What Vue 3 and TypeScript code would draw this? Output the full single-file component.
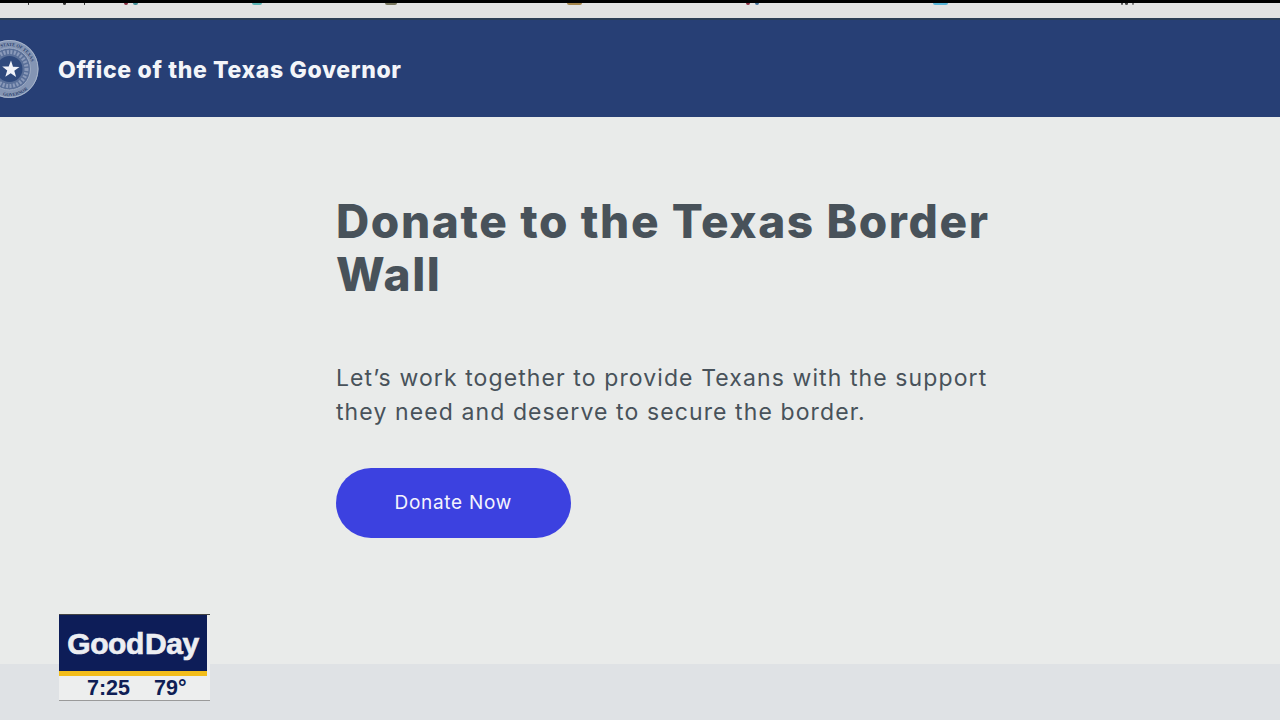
<script setup lang="ts">
// Bits of browser bookmark icons cut off by the top of the frame
const stubs = [
  { x: 28, w: 1, color: '#333333' },
  { x: 63, w: 3, color: '#333333' },
  { x: 84, w: 1, color: '#333333' },
  { x: 124, w: 4, color: '#8a2a3c' },
  { x: 133, w: 5, color: '#3f8f98' },
  { x: 252, w: 10, color: '#5cb5b5' },
  { x: 385, w: 12, color: '#77755c' },
  { x: 567, w: 15, color: '#a5854a' },
  { x: 746, w: 4, color: '#8a2a3c' },
  { x: 755, w: 4, color: '#3f6f98' },
  { x: 933, w: 15, color: '#58b5d8' },
  { x: 1121, w: 2, color: '#555555' },
  { x: 1125, w: 3, color: '#444444' },
  { x: 1132, w: 2, color: '#777777' },
]
</script>

<template>
  <div class="page">
    <!-- browser chrome sliver -->
    <div class="chrome">
      <div class="chrome-black">
        <span
          v-for="s in stubs"
          :key="s.x"
          class="stub"
          :style="{ left: s.x + 'px', width: s.w + 'px', background: s.color }"
        />
      </div>
    </div>

    <!-- site header -->
    <header class="site-head">
      <svg class="seal" width="44" height="60" viewBox="0 0 44 60" aria-hidden="true">
        <circle cx="9.500" cy="30" r="29" fill="#8495b4" />
        <circle cx="9.500" cy="30" r="28.500" fill="none" stroke="#a9b6cc" stroke-width="1" />
        <circle cx="9.500" cy="30" r="21" fill="#5a7099" stroke="#9dabc4" stroke-width="1" />
        <circle cx="9.500" cy="30" r="17" fill="none" stroke="#8a9aba" stroke-width="4" stroke-dasharray="2 1.500" />
        <circle cx="9.500" cy="30" r="13" fill="#2f4a7d" />
        <defs>
          <path id="seal-top" d="M1 8.600a23 23 0 0 1 31.500 21.400" />
          <path id="seal-bot" d="M1 55.600a27 27 0 0 0 35.500-21.600" />
        </defs>
        <text class="seal-text"><textPath href="#seal-top">STATE OF TEXAS</textPath></text>
        <text class="seal-text"><textPath href="#seal-bot" startOffset="4%">GOVERNOR</textPath></text>
        <path
          d="M11 21.500l2 6.200 6.500.2-5.200 3.900 1.800 6.200-5.400-3.700-5.400 3.500 1.900-6.200-5-4.100 6.500-.1z"
          fill="#f0f3f9"
        />
      </svg>
      <span class="site-name">Office of the Texas Governor</span>
    </header>

    <!-- main message -->
    <main class="content">
      <h1 class="title">Donate to the Texas Border Wall</h1>
      <p class="lead">Let’s work together to provide Texans with the support they need and deserve to secure the border.</p>
      <a href="#" class="donate">Donate Now</a>
    </main>

    <div class="foot-band" />

    <!-- TV station bug sits over the page -->
    <div class="bug">
      <div class="bug-top"><span>Good</span><span class="bug-day">Day</span></div>
      <div class="bug-bottom">
        <span>7:25</span>
        <span>79°</span>
      </div>
    </div>
  </div>
</template>

<style>
html, body { margin: 0; padding: 0; overflow: hidden; }
</style>

<style scoped>
.page {
  position: relative;
  display: flex;
  flex-direction: column;
  width: 1280px;
  height: 720px;
  overflow: hidden;
  background: #e9ebea;
  font-family: Inter, "Liberation Sans", sans-serif;
}

/* ─── CHROME ─────────────────────────────── */
.chrome {
  height: 18px;
  background: #e2e2e2;
  border-bottom: 2px solid #2c3e55;
  flex: none;
}
.chrome-black {
  position: relative;
  height: 3px;
  background: #000;
}
.stub {
  position: absolute;
  top: 3px;
  height: 2px;
  border-radius: 0 0 2px 2px;
}

/* ─── HEADER ─────────────────────────────── */
.site-head {
  flex: none;
  display: flex;
  align-items: center;
  gap: 14px;
  height: 97px;
  background: #273f75;
  overflow: hidden;
}
.seal { display: block; flex: none; }
.seal-text {
  font-family: "Liberation Serif", serif;
  font-size: 4.5px;
  font-weight: 700;
  fill: #2a3f6c;
}
.site-name {
  position: relative;
  top: 1px;
  font-size: 23px;
  font-weight: 800;
  letter-spacing: 0.65px;
  color: #f3f5f9;
}

/* ─── CONTENT ────────────────────────────── */
.content {
  flex: 1;
  display: flex;
  flex-direction: column;
  align-items: flex-start;
  padding: 78px 0 0 336px;
}
.title {
  width: 680px;
  margin: 0;
  font-size: 46px;
  line-height: 53px;
  font-weight: 800;
  letter-spacing: 1.62px;
  color: #48525a;
}
.lead {
  width: 660px;
  margin: 60px 0 0;
  font-size: 23px;
  line-height: 34px;
  font-weight: 400;
  letter-spacing: 1.1px;
  color: #48525a;
}
.donate {
  display: flex;
  align-items: center;
  justify-content: center;
  width: 234.5px;
  height: 69.5px;
  margin-top: 39px;
  border-radius: 35px;
  background: #3c41e0;
  color: #f4f4fd;
  font-size: 19px;
  letter-spacing: 0.7px;
  text-decoration: none;
}

/* ─── FOOT ───────────────────────────────── */
.foot-band {
  flex: none;
  height: 56px;
  background: #dfe2e5;
}

.bug {
  position: absolute;
  left: 59px;
  top: 614px;
  width: 151px;
  height: 87px;
  background: #edeeee;
  border-top: 1px solid #444;
  border-bottom: 1px solid #9a9a9a;
  box-sizing: border-box;
  font-family: "Liberation Sans", Arial, sans-serif;
}
.bug-top {
  display: flex;
  justify-content: center;
  gap: 1px;
  width: 148px;
  height: 61px;
  box-sizing: border-box;
  padding-top: 12px;
  background: #0d1d58;
  border-bottom: 5px solid #f3bd1a;
  color: #eceef2;
  font-size: 30px;
  line-height: 33px;
  font-weight: 700;
  letter-spacing: -0.4px;
  -webkit-text-stroke: 0.7px #eceef2;
}
.bug-bottom {
  display: flex;
  gap: 24px;
  padding-left: 28px;
  color: #0f1e55;
  font-size: 21.5px;
  line-height: 25px;
  font-weight: 700;
}
</style>
